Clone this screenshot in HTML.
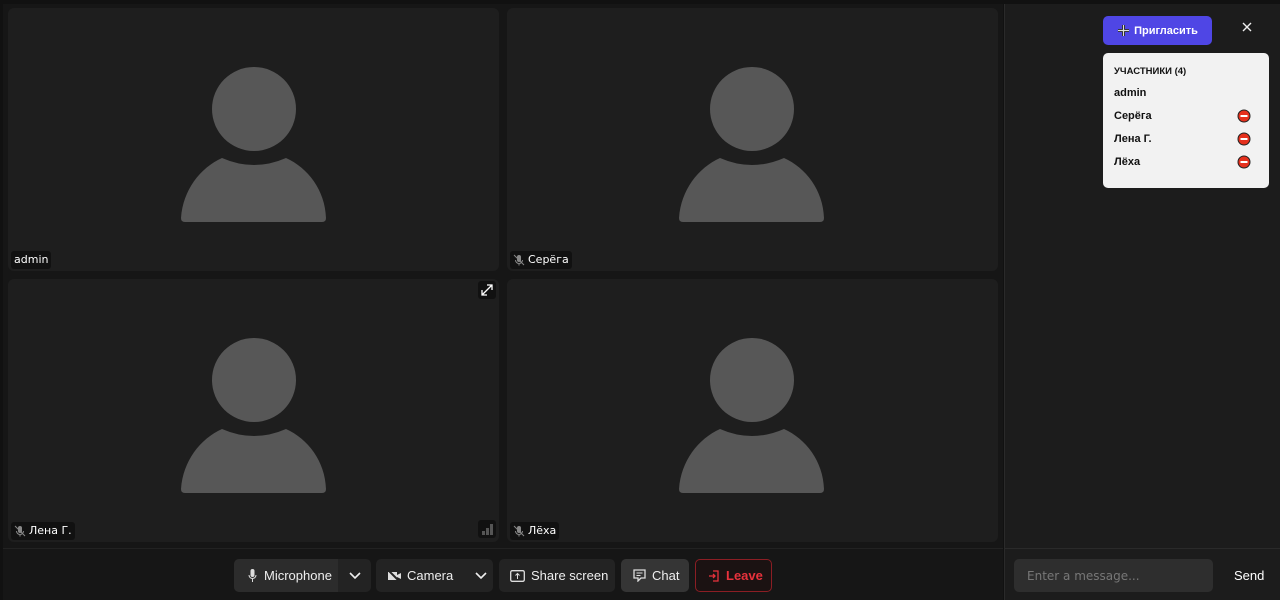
<!DOCTYPE html>
<html><head><meta charset="utf-8"><style>
*{box-sizing:border-box;margin:0;padding:0}
body{width:1280px;height:600px;background:#111;font-family:"Liberation Sans",Arial,sans-serif;position:relative;overflow:hidden;color:#fff}
.main{position:absolute;left:3px;top:4px;width:1000px;height:596px;background:#161616}
.tile{position:absolute;width:491px;height:263px;background:#1e1e1e;border-radius:6px;overflow:hidden}
.tile>svg{position:absolute;left:0;top:0}
.lbl{position:absolute;left:3px;bottom:2px;height:18px;background:#111;border-radius:3px;font-size:11px;line-height:18px;padding:0 3px;color:#fff;display:flex;align-items:center;gap:3px;font-family:"DejaVu Sans",sans-serif}
.lbl svg{position:static;flex:none}
.side{position:absolute;left:1004px;top:4px;width:276px;height:596px;background:#1c1c1c;border-left:1px solid #2a2a2a}
.bar{position:absolute;left:3px;top:548px;width:1000px;height:52px;background:#161616;border-top:1px solid #222}
.btn{position:absolute;top:559px;height:33px;background:#232323;border-radius:5px;display:flex;align-items:center;font-size:13px;color:#eee}
.pl{position:absolute;left:11px;font-weight:bold}
</style></head><body>
<div class="main"></div>
<div class="bar"></div>

<div class="tile" style="left:8px;top:8px">
<svg width="491" height="263"><circle cx="246" cy="101" r="42" fill="#575757"/><path d="M173,210 C175,182 192,160 214,150 Q246,164 278,150 C300,160 317,182 318,210 Q318,214 314,214 L177,214 Q173,214 173,210Z" fill="#575757"/></svg>
<div class="lbl">admin</div></div>

<div class="tile" style="left:507px;top:8px">
<svg width="491" height="263"><circle cx="245" cy="101" r="42" fill="#575757"/><path d="M172,210 C174,182 191,160 213,150 Q245,164 277,150 C299,160 316,182 317,210 Q317,214 313,214 L176,214 Q172,214 172,210Z" fill="#575757"/></svg>
<div class="lbl"><svg width="12" height="12" viewBox="0 0 12 12"><rect x="4" y="1" width="4" height="7" rx="2" fill="#888"/><path d="M2.5,6 a3.5,3.5 0 0 0 7,0 M6,9.5v2" stroke="#888" fill="none"/><path d="M1,1 L11,11" stroke="#888"/></svg>Серёга</div></div>

<div class="tile" style="left:8px;top:279px">
<svg width="491" height="263"><circle cx="246" cy="101" r="42" fill="#575757"/><path d="M173,210 C175,182 192,160 214,150 Q246,164 278,150 C300,160 317,182 318,210 Q318,214 314,214 L177,214 Q173,214 173,210Z" fill="#575757"/>
<rect x="470" y="2" width="18" height="18" rx="3" fill="#111"/><path d="M474,16 L484,6 M479,6 h5 v5 M474,11 v5 h5" stroke="#fff" stroke-width="1.3" fill="none"/>
<rect x="470" y="241" width="18" height="18" rx="3" fill="#111"/><rect x="474" y="252" width="3" height="4" fill="#555"/><rect x="478" y="249" width="3" height="7" fill="#555"/><rect x="482" y="245" width="3" height="11" fill="#555"/></svg>
<div class="lbl"><svg width="12" height="12" viewBox="0 0 12 12"><rect x="4" y="1" width="4" height="7" rx="2" fill="#888"/><path d="M2.5,6 a3.5,3.5 0 0 0 7,0 M6,9.5v2" stroke="#888" fill="none"/><path d="M1,1 L11,11" stroke="#888"/></svg>Лена Г.</div></div>

<div class="tile" style="left:507px;top:279px">
<svg width="491" height="263"><circle cx="245" cy="101" r="42" fill="#575757"/><path d="M172,210 C174,182 191,160 213,150 Q245,164 277,150 C299,160 316,182 317,210 Q317,214 313,214 L176,214 Q172,214 172,210Z" fill="#575757"/></svg>
<div class="lbl"><svg width="12" height="12" viewBox="0 0 12 12"><rect x="4" y="1" width="4" height="7" rx="2" fill="#888"/><path d="M2.5,6 a3.5,3.5 0 0 0 7,0 M6,9.5v2" stroke="#888" fill="none"/><path d="M1,1 L11,11" stroke="#888"/></svg>Лёха</div></div>

<div class="side"></div>
<div style="position:absolute;left:1103px;top:16px;width:109px;height:29px;background:#4f46e5;border-radius:5px;display:flex;align-items:center;justify-content:center;font-size:11px;font-weight:bold;gap:4px"><svg width="13" height="13"><path d="M6.5,1v11M1,6.5h11" stroke="#222" stroke-width="3"/><path d="M6.5,1v11M1,6.5h11" stroke="#ddd" stroke-width="1.2"/></svg>Пригласить</div>
<svg style="position:absolute;left:1242px;top:22px" width="10" height="10"><path d="M1,1L9,9M9,1L1,9" stroke="#eee" stroke-width="1.4"/></svg>
<div style="position:absolute;left:1103px;top:53px;width:166px;height:135px;background:#f2f2f2;border-radius:5px;color:#111;font-size:11px">
<div class="pl" style="top:13px;font-size:9.5px">УЧАСТНИКИ (4)</div>
<div class="pl" style="top:34px">admin</div>
<div class="pl" style="top:57px">Серёга</div>
<div class="pl" style="top:80px">Лена Г.</div>
<div class="pl" style="top:103px">Лёха</div>
<svg style="position:absolute;left:134px;top:56px" width="14" height="60"><g fill="#e5301d" stroke="#222"><circle cx="7" cy="7" r="6"/><circle cx="7" cy="30" r="6"/><circle cx="7" cy="53" r="6"/></g><g stroke="#fff" stroke-width="2"><path d="M3.5,7h7M3.5,30h7M3.5,53h7"/></g></svg>
</div>
<div style="position:absolute;left:1004px;top:548px;width:276px;height:1px;background:#2a2a2a"></div>
<div style="position:absolute;left:1014px;top:559px;width:199px;height:33px;background:#2e2e2e;border-radius:5px;font-size:12px;color:#777;padding:10px 13px;font-family:'DejaVu Sans',sans-serif">Enter a message...</div>
<div style="position:absolute;left:1234px;top:568px;font-size:13px;color:#fff">Send</div>

<div class="btn" style="left:234px;width:137px;overflow:hidden"><div style="width:104px;height:33px;background:#2c2c2c;display:flex;align-items:center;padding-left:14px;gap:7px"><svg width="9" height="13"><rect x="2.5" y="0" width="4" height="8" rx="2" fill="#ddd"/><path d="M1,6a3.5,3.5 0 0 0 7,0M4.5,10v3" stroke="#ddd" fill="none"/></svg>Microphone</div><svg style="margin-left:11px" width="12" height="8"><path d="M1,1l5,5l5,-5" stroke="#eee" stroke-width="1.6" fill="none"/></svg></div>
<div class="btn" style="left:376px;width:117px;padding-left:12px"><svg width="13" height="11"><rect x="0" y="2" width="9" height="8" fill="#ddd"/><path d="M9,5l4,-2v6l-4,-2z" fill="#ddd"/><path d="M0,0L11,11" stroke="#232323" stroke-width="2"/></svg><span style="margin-left:6px">Camera</span><svg style="margin-left:22px" width="12" height="8"><path d="M1,1l5,5l5,-5" stroke="#eee" stroke-width="1.6" fill="none"/></svg></div>
<div class="btn" style="left:499px;width:116px;padding-left:11px"><svg width="15" height="12"><rect x="0.7" y="0.7" width="13.6" height="10.6" rx="1.5" stroke="#ddd" fill="none" stroke-width="1.3"/><path d="M7.5,9V3.5M5.5,5.5l2,-2l2,2" stroke="#ddd" fill="none"/></svg><span style="margin-left:6px">Share screen</span></div>
<div class="btn" style="left:621px;width:68px;background:#353535;padding-left:12px"><svg width="13" height="13"><path d="M1,1h11v8h-4l-3,3v-3h-4z" stroke="#ddd" fill="none" stroke-width="1.3"/><path d="M3.5,4h6M3.5,6.5h4" stroke="#ddd"/></svg><span style="margin-left:6px">Chat</span></div>
<div class="btn" style="left:695px;width:77px;background:#1b1212;border:1px solid #8b1e24;color:#e8323c;font-weight:bold;padding-left:12px"><svg width="11" height="12"><path d="M5,1h5v10h-5M1,6h6M5,4l2,2l-2,2" stroke="#e8323c" fill="none" stroke-width="1.3"/></svg><span style="margin-left:7px">Leave</span></div>
</body></html>
